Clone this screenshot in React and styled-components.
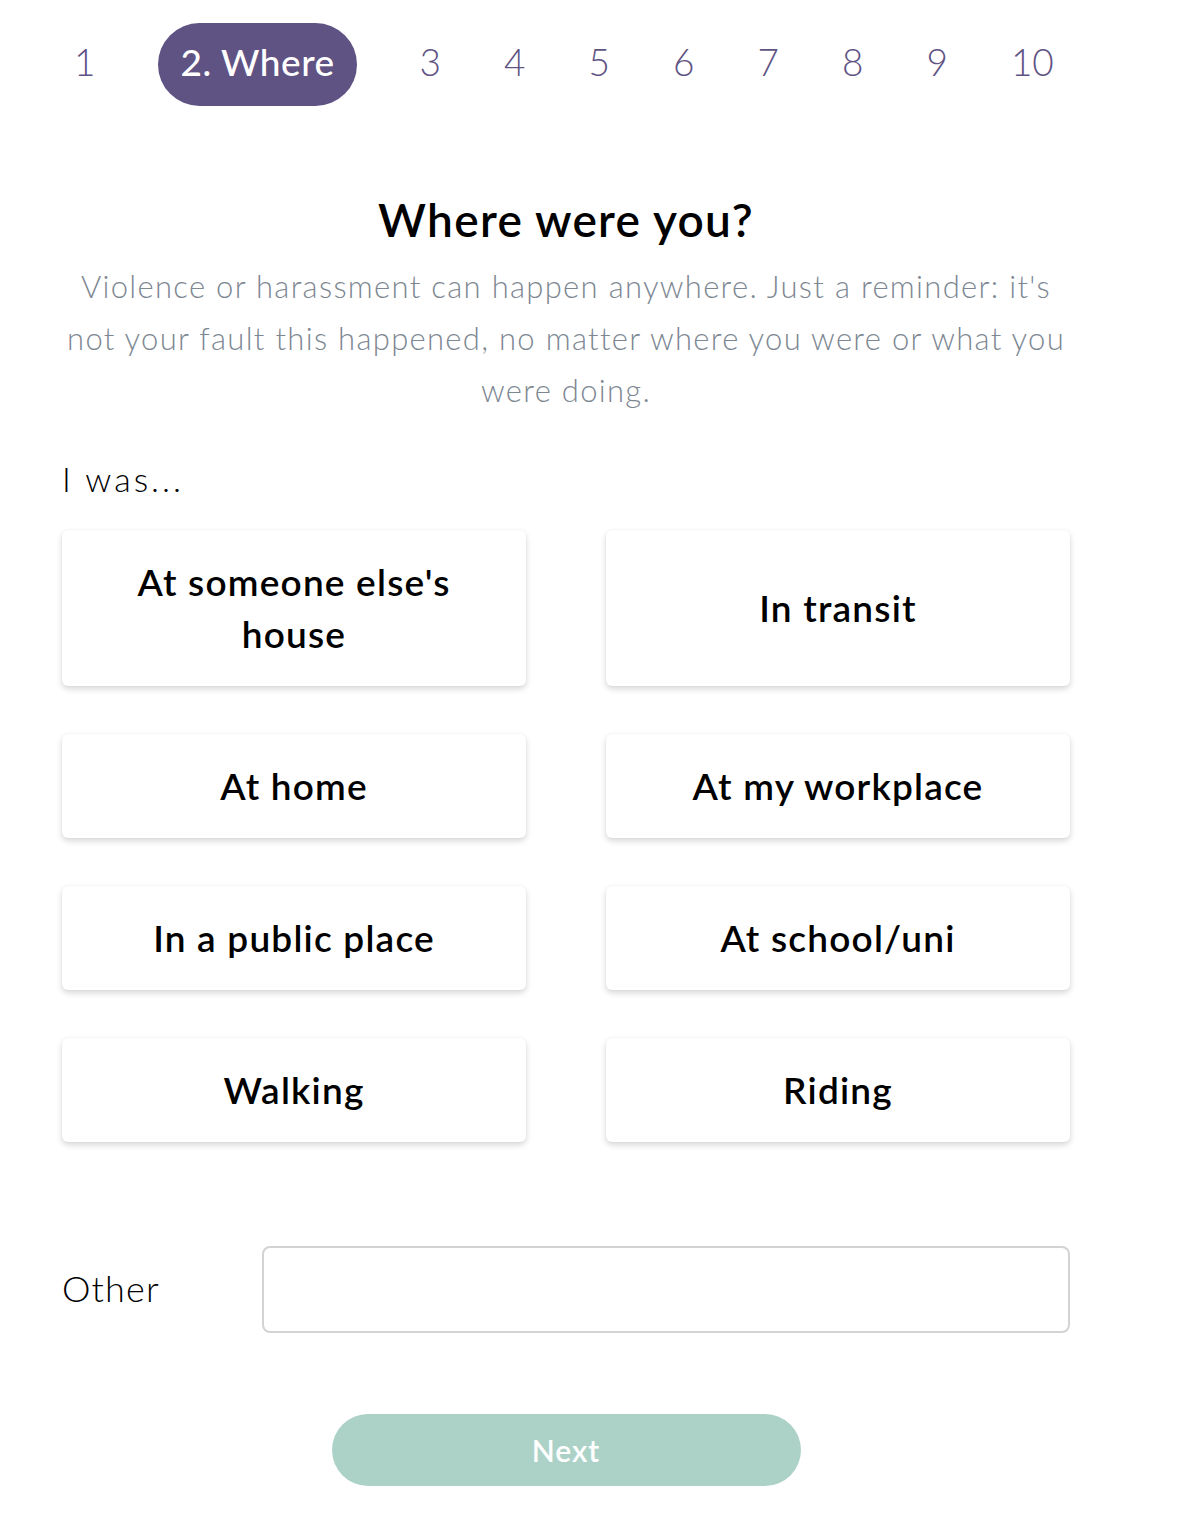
import React, { useState } from 'react';
import styled, { createGlobalStyle } from 'styled-components';

const steps = ['1', '2. Where', '3', '4', '5', '6', '7', '8', '9', '10'];

const places = [
  "At someone else's house",
  'In transit',
  'At home',
  'At my workplace',
  'In a public place',
  'At school/uni',
  'Walking',
  'Riding',
];

function App() {
  const [other, setOther] = useState('');

  return (
    <Page>
      <GlobalStyle />
      <StepBar>
        {steps.map((step, i) => (
          <Step key={step} active={i === 1}>
            {step}
          </Step>
        ))}
      </StepBar>

      <Content>
        <Title>Where were you?</Title>
        <Intro>
          Violence or harassment can happen anywhere. Just a reminder: it's
          not your fault this happened, no matter where you were or what you
          were doing.
        </Intro>

        <Prompt>I was...</Prompt>

        <Options>
          {places.map((place) => (
            <Option key={place}>{place}</Option>
          ))}
        </Options>

        <OtherRow>
          <OtherLabel>Other</OtherLabel>
          <OtherInput value={other} onChange={(e) => setOther(e.target.value)} />
        </OtherRow>

        <NextButton disabled={!other}>Next</NextButton>
      </Content>
    </Page>
  );
}

export default App;

const GlobalStyle = createGlobalStyle`
  body {
    margin: 0;
    background: #fff;
    font-family: Lato, "Noto Sans", sans-serif;
  }
`;

const Page = styled.div`
  width: 1184px;
  min-height: 1516px;
  background: #fff;
`;

const StepBar = styled.nav`
  display: flex;
  align-items: center;
  gap: 63px;
  padding: 23px 0 0 74px;
  height: 83px;
`;

const Step = styled.span`
  display: flex;
  align-items: center;
  box-sizing: border-box;
  height: 83px;
  padding-bottom: 7px;
  font-size: 37px;
  font-weight: ${(p) => (p.active ? 500 : 300)};
  letter-spacing: ${(p) => (p.active ? '0.5px' : '0')};
  color: ${(p) => (p.active ? '#fff' : '#5f5384')};
  background: ${(p) => (p.active ? '#5f5384' : 'transparent')};
  border-radius: 42px;
  padding-left: ${(p) => (p.active ? '22px' : '0')};
  padding-right: ${(p) => (p.active ? '22px' : '0')};
`;

const Content = styled.main`
  width: 1008px;
  margin-left: 62px;
  display: flex;
  flex-direction: column;
`;

const Title = styled.h1`
  margin: 86px 0 0;
  text-align: center;
  font-size: 46px;
  font-weight: 600;
  letter-spacing: 1.3px;
  line-height: 56px;
  color: #000;
`;

const Intro = styled.p`
  margin: 12px -6px 0;
  text-align: center;
  font-size: 31px;
  font-weight: 300;
  line-height: 52px;
  color: #7d8792;
  letter-spacing: 1.3px;
`;

const Prompt = styled.p`
  margin: 41px 0 0;
  font-size: 34px;
  font-weight: 300;
  letter-spacing: 3px;
  line-height: 44px;
  color: #000;
`;

const Options = styled.div`
  display: grid;
  grid-template-columns: 464px 464px;
  column-gap: 80px;
  row-gap: 48px;
  margin-top: 29px;
`;

const Option = styled.button`
  display: flex;
  align-items: center;
  justify-content: center;
  min-height: 104px;
  padding: 26px 70px;
  border: none;
  border-radius: 6px;
  background: #fff;
  box-shadow: 0 3px 6px rgba(0, 0, 0, 0.16), 0 0 2px rgba(0, 0, 0, 0.05);
  font-family: inherit;
  font-size: 37px;
  font-weight: 600;
  letter-spacing: 1.2px;
  line-height: 52px;
  color: #000;
  text-align: center;
  cursor: pointer;
`;

const OtherRow = styled.div`
  display: flex;
  align-items: center;
  margin-top: 104px;
`;

const OtherLabel = styled.label`
  width: 200px;
  padding-bottom: 4px;
  font-size: 36px;
  font-weight: 300;
  letter-spacing: 1.2px;
  color: #000;
`;

const OtherInput = styled.input`
  flex: 1;
  height: 87px;
  box-sizing: border-box;
  border: 2px solid #d3d3d3;
  border-radius: 8px;
  padding: 0 20px;
  font-family: inherit;
  font-size: 32px;
  outline: none;
`;

const NextButton = styled.button`
  align-self: center;
  width: 469px;
  height: 72px;
  margin-top: 81px;
  border: none;
  border-radius: 36px;
  background: #acd2c8;
  color: #fff;
  font-family: inherit;
  font-size: 30px;
  font-weight: 600;
  letter-spacing: 1px;
  cursor: pointer;
`;
